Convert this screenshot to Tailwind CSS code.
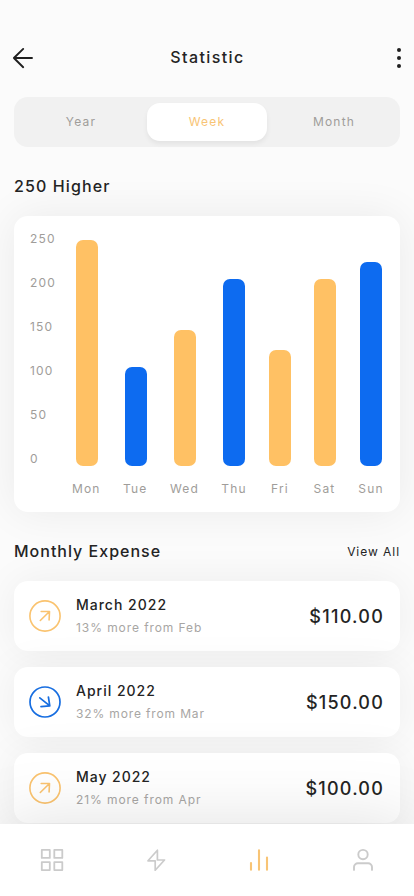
<!DOCTYPE html>
<html lang="en">
<head>
<meta charset="utf-8">
<meta name="viewport" content="width=device-width, initial-scale=1">
<title>Statistic</title>
<script src="https://cdn.jsdelivr.net/npm/@tailwindcss/browser@4"></script>
</head>
<body class="font-['Inter',sans-serif] bg-[#fbfbfb] text-[#242424]">
<div class="relative flex h-[896px] w-[414px] flex-col overflow-hidden">
  <header class="mt-[42px] flex h-8 shrink-0 items-center justify-between pl-[11px] pr-3">
    <svg class="h-6 w-6" viewBox="0 0 24 24" fill="none" stroke="#1f1f1f" stroke-width="1.9" stroke-linecap="round" stroke-linejoin="round"><path d="M21 12H2.9M12.2 2.9 2.9 12l9.3 9.2"/></svg>
    <h1 class="ml-[-17px] h-8 text-[16px] leading-[31px] font-medium tracking-[1.4px]">Statistic</h1>
    <svg class="mr-[1px] h-6 w-[4px]" viewBox="0 0 4 24" fill="#1f1f1f"><circle cx="2" cy="4" r="2"/><circle cx="2" cy="12" r="2"/><circle cx="2" cy="20" r="2"/></svg>
  </header>

  <div class="mx-[14px] mt-[23px] flex h-[50px] shrink-0 rounded-[14px] bg-[#f1f1f1] p-[6px] text-[12px] leading-[38px] tracking-[1.2px] text-[#a09d9a]">
    <span class="w-[127px] pr-[5px] text-center">Year</span>
    <span class="h-[38px] w-[120px] rounded-[13px] bg-white text-center leading-[37px] text-[#f8c475] shadow-[0_3px_5px_rgba(0,0,0,0.06)]">Week</span>
    <span class="w-[127px] pl-[7px] text-center">Month</span>
  </div>

  <h2 class="mx-[14px] mt-[27px] h-6 shrink-0 text-[16px] leading-6 font-medium tracking-[1.1px]">250 Higher</h2>

  <section class="mx-[14px] mt-[18px] flex h-[296px] shrink-0 rounded-[14px] bg-white pt-[13px] text-[12px] text-[#a09d9a] tracking-[1.2px] shadow-[0_0_44px_rgba(0,0,0,0.07)]">
    <div class="flex w-[48.5px] flex-col gap-6 pl-4 leading-5">
      <span>250</span><span>200</span><span>150</span><span>100</span><span>50</span><span>0</span>
    </div>
    <div class="grid h-[270px] grid-cols-[49px_49px_49px_49px_43px_47px_45px]">
      <div class="flex flex-col items-center justify-end"><i class="h-[226px] w-[22px] rounded-[7px] bg-[#ffc164]"></i><span class="mt-[13px] h-5 pr-[1.4px] leading-5">Mon</span></div>
      <div class="flex flex-col items-center justify-end"><i class="h-[99px] w-[22px] rounded-[7px] bg-[#0d6bf0]"></i><span class="mt-[13px] h-5 pr-[1.4px] leading-5">Tue</span></div>
      <div class="flex flex-col items-center justify-end"><i class="h-[136px] w-[22px] rounded-[7px] bg-[#ffc164]"></i><span class="mt-[13px] h-5 pr-px leading-5">Wed</span></div>
      <div class="flex flex-col items-center justify-end"><i class="h-[187px] w-[22px] rounded-[7px] bg-[#0d6bf0]"></i><span class="mt-[13px] h-5 leading-5">Thu</span></div>
      <div class="flex flex-col items-center justify-end"><i class="h-[116px] w-[22px] rounded-[7px] bg-[#ffc164]"></i><span class="mt-[13px] h-5 leading-5">Fri</span></div>
      <div class="flex flex-col items-center justify-end"><i class="h-[187px] w-[22px] rounded-[7px] bg-[#ffc164]"></i><span class="mt-[13px] h-5 pr-px leading-5">Sat</span></div>
      <div class="flex flex-col items-center justify-end"><i class="h-[204px] w-[22px] rounded-[7px] bg-[#0d6bf0]"></i><span class="mt-[13px] h-5 leading-5">Sun</span></div>
    </div>
  </section>

  <div class="mx-[14px] mt-[27px] flex h-6 shrink-0 items-center justify-between">
    <h2 class="text-[16px] leading-6 font-medium tracking-[1px]">Monthly Expense</h2>
    <span class="pt-[2px] text-[12px] leading-6 tracking-[0.95px]">View All</span>
  </div>

  <div class="mx-[14px] mt-[18px] flex shrink-0 flex-col gap-4">
    <article class="flex h-[70px] items-center rounded-[14px] bg-white pl-[15px] pr-4 shadow-[0_0_40px_rgba(0,0,0,0.06)]">
      <svg class="h-8 w-8" viewBox="0 0 32 32" fill="none" stroke="#fac36f" stroke-width="1.6" stroke-linecap="round" stroke-linejoin="round"><circle cx="16" cy="16" r="15.1"/><path d="m11.3 20.5 9.2-9M12.2 11.5h8.3l-.4 8.5"/></svg>
      <div class="ml-[15px] flex-1">
        <h3 class="text-[14px] leading-[22px] font-medium tracking-[1px]">March 2022</h3>
        <p class="mt-[2px] text-[12px] leading-5 tracking-[0.92px] text-[#a8a6a4]">13% more from Feb</p>
      </div>
      <strong class="pt-px text-[18px] font-medium tracking-[1.25px]">$110.00</strong>
    </article>
    <article class="flex h-[70px] items-center rounded-[14px] bg-white pl-[15px] pr-4 shadow-[0_0_40px_rgba(0,0,0,0.06)]">
      <svg class="h-8 w-8" viewBox="0 0 32 32" fill="none" stroke="#166de0" stroke-width="1.7" stroke-linecap="round" stroke-linejoin="round"><circle cx="16" cy="16" r="15"/><path d="m10.8 11.8 10 8M19.4 11l1.4 8.8-8.8.8"/></svg>
      <div class="ml-[15px] flex-1">
        <h3 class="text-[14px] leading-[22px] font-medium tracking-[1px]">April 2022</h3>
        <p class="mt-[2px] text-[12px] leading-5 tracking-[0.86px] text-[#a8a6a4]">32% more from Mar</p>
      </div>
      <strong class="pt-px text-[18px] font-medium tracking-[1.2px]">$150.00</strong>
    </article>
    <article class="flex h-[70px] items-center rounded-[14px] bg-white pl-[15px] pr-4 shadow-[0_0_40px_rgba(0,0,0,0.06)]">
      <svg class="h-8 w-8" viewBox="0 0 32 32" fill="none" stroke="#fac36f" stroke-width="1.6" stroke-linecap="round" stroke-linejoin="round"><circle cx="16" cy="16" r="15.1"/><path d="m11.3 20.5 9.2-9M12.2 11.5h8.3l-.4 8.5"/></svg>
      <div class="ml-[15px] flex-1">
        <h3 class="text-[14px] leading-[22px] font-medium tracking-[0.95px]">May 2022</h3>
        <p class="mt-[2px] text-[12px] leading-5 tracking-[0.92px] text-[#a8a6a4]">21% more from Apr</p>
      </div>
      <strong class="pt-px text-[18px] font-medium tracking-[1.2px]">$100.00</strong>
    </article>
  </div>

  <nav class="absolute inset-x-0 bottom-0 flex h-[72px] justify-between bg-white pl-10 pr-[39px] pt-6 shadow-[0_0_70px_rgba(0,0,0,0.13)]">
    <svg class="h-6 w-6" viewBox="0 0 24 24" fill="none" stroke="#cbcbcb" stroke-width="1.8" stroke-linejoin="round"><path d="M1.8 1.9h8v8h-8zM14.3 1.9h8v8h-8zM1.8 14.1h8v8h-8zM14.3 14.1h8v8h-8z"/></svg>
    <svg class="h-6 w-6" viewBox="0 0 24 24" fill="none" stroke="#cbcbcb" stroke-width="1.7" stroke-linejoin="round"><path d="M13.4 2.2 4 12.8h7.2v9.4L20.5 12h-7.1z"/></svg>
    <svg class="h-6 w-6" viewBox="0 0 24 24" fill="none" stroke="#f8c475" stroke-width="2.1" stroke-linecap="round"><path d="M4 15v6.7M12 2.2v19.5M20 9.6v12.1"/></svg>
    <svg class="h-6 w-6" viewBox="0 0 24 24" fill="none" stroke="#cbcbcb" stroke-width="1.9" stroke-linecap="round"><circle cx="12" cy="6.6" r="4.7"/><path d="M3 21.9v-2.8a3.9 3.9 0 0 1 4-3.9h10a3.9 3.9 0 0 1 4 3.9v2.8"/></svg>
  </nav>
</div>
</body>
</html>
